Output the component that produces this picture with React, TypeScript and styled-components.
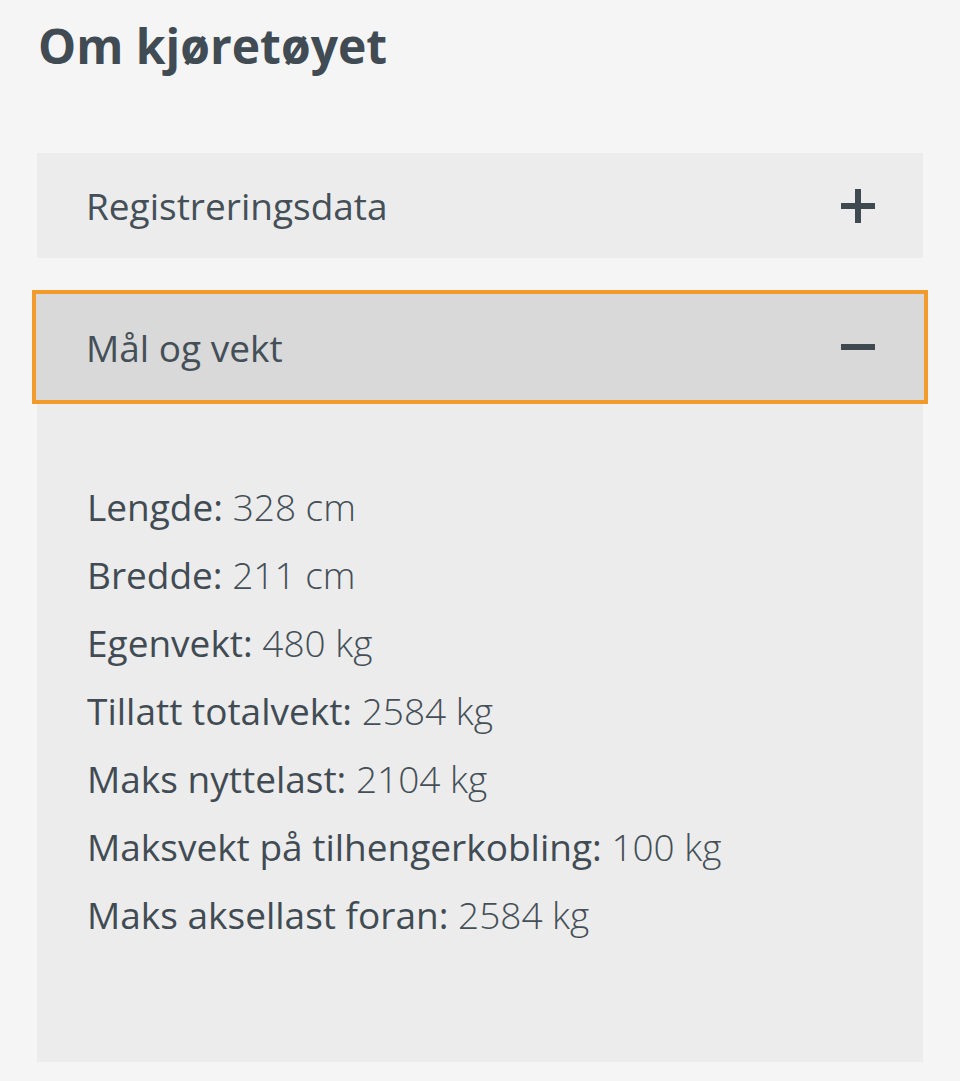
import React from 'react';
import styled, { createGlobalStyle } from 'styled-components';

const GlobalStyle = createGlobalStyle`
  html, body {
    margin: 0;
    padding: 0;
    background: #f5f5f5;
  }
  body {
    font-family: 'Open Sans', Lato, sans-serif;
    color: #444f57;
  }
`;

const Page = styled.div`
  padding: 14px 37px 0 37px;
`;

const Title = styled.h1`
  margin: 0 0 0 1px;
  font-size: 48px;
  font-weight: 700;
  line-height: 64px;
  color: #414b53;
`;

const Accordion = styled.div`
  margin-top: 75px;
  display: flex;
  flex-direction: column;
  gap: 32px;
`;

const Item = styled.div``;

const Header = styled.button<{ $open?: boolean }>`
  display: flex;
  align-items: center;
  justify-content: space-between;
  width: ${p => (p.$open ? 'calc(100% + 10px)' : '100%')};
  margin: ${p => (p.$open ? '0 -5px' : '0')};
  height: ${p => (p.$open ? '114px' : '105px')};
  padding: 0 ${p => (p.$open ? '49px' : '48px')} 0 ${p => (p.$open ? '50px' : '49px')};
  box-sizing: border-box;
  border: ${p => (p.$open ? '4px solid #f39a2c' : 'none')};
  background: ${p => (p.$open ? '#d9d9d9' : '#ececec')};
  font-family: 'Open Sans', Lato, sans-serif;
  font-size: 37px;
  font-weight: 400;
  color: #444f57;
  cursor: pointer;
  text-align: left;
`;

const Icon = styled.svg`
  width: 34px;
  height: 34px;
  flex: none;
`;

const Body = styled.div`
  background: #ececec;
  padding: 69px 50px 113px;
  display: flex;
  flex-direction: column;
`;

const Row = styled.div`
  font-size: 37px;
  line-height: 68px;
  color: #444f57;
`;

const Label = styled.span`
  font-weight: 500;
  color: #414b53;
`;

const Value = styled.span`
  font-weight: 300;
`;

const rows: [string, string][] = [
  ['Lengde:', '328 cm'],
  ['Bredde:', '211 cm'],
  ['Egenvekt:', '480 kg'],
  ['Tillatt totalvekt:', '2584 kg'],
  ['Maks nyttelast:', '2104 kg'],
  ['Maksvekt på tilhengerkobling:', '100 kg'],
  ['Maks aksellast foran:', '2584 kg'],
];

const Plus = () => (
  <Icon viewBox="0 0 34 34">
    <rect x="0" y="14" width="34" height="6" fill="#3f4950" />
    <rect x="14" y="0" width="6" height="34" fill="#3f4950" />
  </Icon>
);

const Minus = () => (
  <Icon viewBox="0 0 34 34">
    <rect x="0" y="14" width="34" height="6" fill="#3f4950" />
  </Icon>
);

const App: React.FC = () => {
  return (
    <>
      <GlobalStyle />
      <Page>
        <Title>Om kjøretøyet</Title>
        <Accordion>
          <Item>
            <Header>
              <span>Registreringsdata</span>
              <Plus />
            </Header>
          </Item>
          <Item>
            <Header $open>
              <span>Mål og vekt</span>
              <Minus />
            </Header>
            <Body>
              {rows.map(([label, value]) => (
                <Row key={label}>
                  <Label>{label}</Label> <Value>{value}</Value>
                </Row>
              ))}
            </Body>
          </Item>
        </Accordion>
      </Page>
    </>
  );
};

export default App;
